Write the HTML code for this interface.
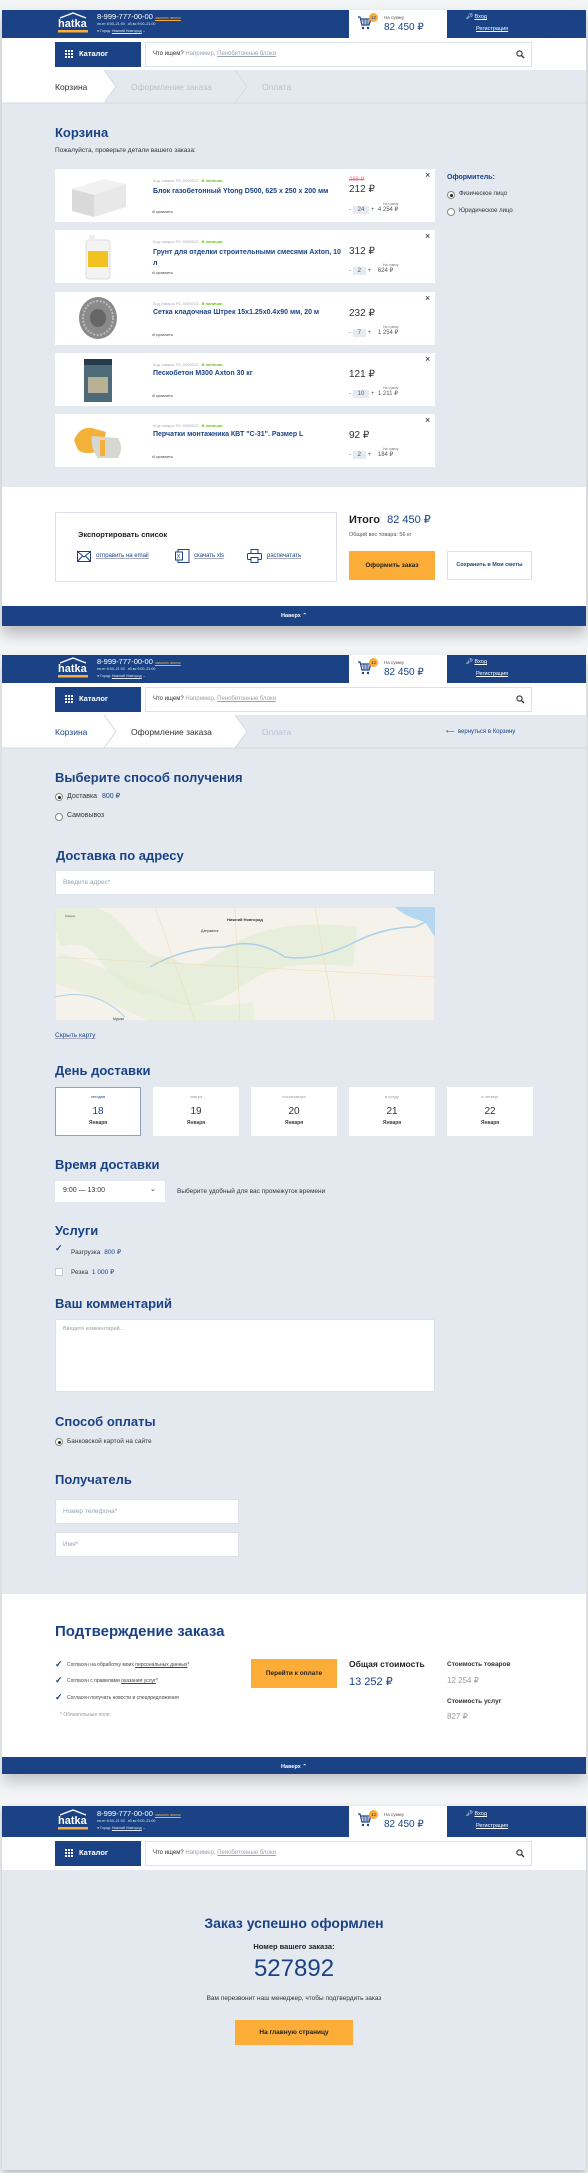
<!DOCTYPE html>
<html><head><meta charset="utf-8">
<style>
*{margin:0;padding:0;box-sizing:border-box}
body{width:588px;height:2173px;background:#f4f5f7;font-family:"Liberation Sans",sans-serif;position:relative;overflow:hidden;color:#222}
.a{position:absolute;white-space:nowrap}
.blue{background:#1a4285}
.gray{background:#e4e9f0}
.h{color:#1a4285;font-weight:bold;font-size:13px}
.card{background:#fff}
.inp{background:#fff;border:1px solid #dde2ea}
.ph{color:#9aa3ad;font-size:6.5px}
.rad{width:8px;height:8px;border:1px solid #888;border-radius:50%;background:#fff}
.rad.on::after{content:"";position:absolute;left:1.5px;top:1.5px;width:3px;height:3px;border-radius:50%;background:#222}
.chk{width:8px;height:8px;border:1px solid #c8ced6;background:#fff}
.tick{color:#1a4285;font-size:9px;font-weight:bold}
.or{background:#fbad38}
.sm{font-size:4px;color:#aab}
.lnk{color:#1a4285;text-decoration:underline;text-decoration-color:#aab}
</style></head><body>

<div class="a" style="left:2px;top:10px;width:584px;height:616px;background:#fff;box-shadow:0 8px 14px rgba(0,0,0,.25)"></div>
<div class="a" style="left:2px;top:655px;width:584px;height:1119px;background:#fff;box-shadow:0 8px 14px rgba(0,0,0,.2)"></div>
<div class="a" style="left:2px;top:1806px;width:584px;height:364px;background:#fff;box-shadow:0 3px 6px rgba(0,0,0,.25)"></div>

<!-- header 1 -->
<div class="a blue" style="left:2px;top:10px;width:347px;height:28px"></div>
<div class="a blue" style="left:447px;top:10px;width:139px;height:28px"></div>
<svg class="a" style="left:58px;top:12px" width="32" height="24"><path d="M2 6 L15 1 L28 6" stroke="#fff" stroke-width="1.3" fill="none"/><text x="0" y="15" fill="#fff" font-family="Liberation Sans" font-weight="bold" font-size="11">hatka</text><rect x="0" y="18" width="30" height="2.5" fill="#fbad38"/></svg>
<div class="a" style="left:97px;top:12px;color:#fff;font-size:7.5px">8-999-777-00-00 <span style="font-size:3.5px;color:#fbad38;text-decoration:underline">заказать звонок</span></div>
<div class="a" style="left:97px;top:22px;color:#dfe6f2;font-size:3.6px">пн-пт 8:00–21:00 &nbsp; сб-вс 9:00–21:00</div>
<div class="a" style="left:97px;top:29px;color:#dfe6f2;font-size:3.6px">● Город: <u>Нижний Новгород</u> ⌄</div>
<svg class="a" style="left:358px;top:16px" width="14" height="14"><path d="M0 1h2l2 8h7l2-6H3" stroke="#1a4285" stroke-width="1.2" fill="none"/><path d="M4 5h8M5 7h6M6 3v6M9 3v6" stroke="#1a4285" stroke-width=".7"/><circle cx="5" cy="12" r="1.2" fill="#1a4285"/><circle cx="10" cy="12" r="1.2" fill="#1a4285"/></svg>
<div class="a or" style="left:369px;top:13px;width:9px;height:9px;border-radius:50%;font-size:4.5px;text-align:center;line-height:9px;color:#1a4285">12</div>
<div class="a" style="left:384px;top:15px;font-size:4.5px;color:#555">На сумму</div>
<div class="a" style="left:384px;top:22px;font-size:10px;color:#1a4285">82 450 ₽</div>
<div class="a" style="left:466px;top:14px;color:#fff;font-size:5.5px">🔑︎ <u>Вход</u></div>
<div class="a" style="left:476px;top:26px;color:#fff;font-size:5.5px"><u>Регистрация</u></div>
<div class="a blue" style="left:55px;top:42px;width:86px;height:25px"></div>
<div class="a" style="left:65px;top:50px;width:8px;height:8px;background:repeating-linear-gradient(90deg,#fff 0 2px,transparent 2px 3px),#1a4285;"></div>
<div class="a" style="left:65px;top:50px;width:8px;height:8px;background:repeating-linear-gradient(0deg,transparent 0 2px,#1a4285 2px 3px)"></div>
<div class="a" style="left:79px;top:49px;color:#fff;font-size:7.5px;font-weight:bold">Каталог</div>
<div class="a inp" style="left:145px;top:42px;width:387px;height:25px"></div>
<div class="a" style="left:153px;top:51px;font-size:6px;color:#333">Что ищем? <span style="color:#9aa3ad">Например, <u>Пенобетонные блоки</u></span></div>
<svg class="a" style="left:516px;top:50px" width="9" height="9"><circle cx="3.5" cy="3.5" r="2.6" stroke="#333" stroke-width="1.1" fill="none"/><path d="M5.5 5.5L8 8" stroke="#333" stroke-width="1.3"/></svg>

<!-- header 2 -->
<div class="a blue" style="left:2px;top:655px;width:347px;height:28px"></div>
<div class="a blue" style="left:447px;top:655px;width:139px;height:28px"></div>
<svg class="a" style="left:58px;top:657px" width="32" height="24"><path d="M2 6 L15 1 L28 6" stroke="#fff" stroke-width="1.3" fill="none"/><text x="0" y="15" fill="#fff" font-family="Liberation Sans" font-weight="bold" font-size="11">hatka</text><rect x="0" y="18" width="30" height="2.5" fill="#fbad38"/></svg>
<div class="a" style="left:97px;top:657px;color:#fff;font-size:7.5px">8-999-777-00-00 <span style="font-size:3.5px;color:#fbad38;text-decoration:underline">заказать звонок</span></div>
<div class="a" style="left:97px;top:667px;color:#dfe6f2;font-size:3.6px">пн-пт 8:00–21:00 &nbsp; сб-вс 9:00–21:00</div>
<div class="a" style="left:97px;top:674px;color:#dfe6f2;font-size:3.6px">● Город: <u>Нижний Новгород</u> ⌄</div>
<svg class="a" style="left:358px;top:661px" width="14" height="14"><path d="M0 1h2l2 8h7l2-6H3" stroke="#1a4285" stroke-width="1.2" fill="none"/><path d="M4 5h8M5 7h6M6 3v6M9 3v6" stroke="#1a4285" stroke-width=".7"/><circle cx="5" cy="12" r="1.2" fill="#1a4285"/><circle cx="10" cy="12" r="1.2" fill="#1a4285"/></svg>
<div class="a or" style="left:369px;top:658px;width:9px;height:9px;border-radius:50%;font-size:4.5px;text-align:center;line-height:9px;color:#1a4285">12</div>
<div class="a" style="left:384px;top:660px;font-size:4.5px;color:#555">На сумму</div>
<div class="a" style="left:384px;top:667px;font-size:10px;color:#1a4285">82 450 ₽</div>
<div class="a" style="left:466px;top:659px;color:#fff;font-size:5.5px">🔑︎ <u>Вход</u></div>
<div class="a" style="left:476px;top:671px;color:#fff;font-size:5.5px"><u>Регистрация</u></div>
<div class="a blue" style="left:55px;top:687px;width:86px;height:25px"></div>
<div class="a" style="left:65px;top:695px;width:8px;height:8px;background:repeating-linear-gradient(90deg,#fff 0 2px,transparent 2px 3px),#1a4285;"></div>
<div class="a" style="left:65px;top:695px;width:8px;height:8px;background:repeating-linear-gradient(0deg,transparent 0 2px,#1a4285 2px 3px)"></div>
<div class="a" style="left:79px;top:694px;color:#fff;font-size:7.5px;font-weight:bold">Каталог</div>
<div class="a inp" style="left:145px;top:687px;width:387px;height:25px"></div>
<div class="a" style="left:153px;top:696px;font-size:6px;color:#333">Что ищем? <span style="color:#9aa3ad">Например, <u>Пенобетонные блоки</u></span></div>
<svg class="a" style="left:516px;top:695px" width="9" height="9"><circle cx="3.5" cy="3.5" r="2.6" stroke="#333" stroke-width="1.1" fill="none"/><path d="M5.5 5.5L8 8" stroke="#333" stroke-width="1.3"/></svg>

<!-- header 3 -->
<div class="a blue" style="left:2px;top:1806px;width:347px;height:31px"></div>
<div class="a blue" style="left:447px;top:1806px;width:139px;height:31px"></div>
<svg class="a" style="left:58px;top:1809px" width="32" height="24"><path d="M2 6 L15 1 L28 6" stroke="#fff" stroke-width="1.3" fill="none"/><text x="0" y="15" fill="#fff" font-family="Liberation Sans" font-weight="bold" font-size="11">hatka</text><rect x="0" y="18" width="30" height="2.5" fill="#fbad38"/></svg>
<div class="a" style="left:97px;top:1809px;color:#fff;font-size:7.5px">8-999-777-00-00 <span style="font-size:3.5px;color:#fbad38;text-decoration:underline">заказать звонок</span></div>
<div class="a" style="left:97px;top:1819px;color:#dfe6f2;font-size:3.6px">пн-пт 8:00–21:00 &nbsp; сб-вс 9:00–21:00</div>
<div class="a" style="left:97px;top:1826px;color:#dfe6f2;font-size:3.6px">● Город: <u>Нижний Новгород</u> ⌄</div>
<svg class="a" style="left:358px;top:1813px" width="14" height="14"><path d="M0 1h2l2 8h7l2-6H3" stroke="#1a4285" stroke-width="1.2" fill="none"/><path d="M4 5h8M5 7h6M6 3v6M9 3v6" stroke="#1a4285" stroke-width=".7"/><circle cx="5" cy="12" r="1.2" fill="#1a4285"/><circle cx="10" cy="12" r="1.2" fill="#1a4285"/></svg>
<div class="a or" style="left:369px;top:1810px;width:9px;height:9px;border-radius:50%;font-size:4.5px;text-align:center;line-height:9px;color:#1a4285">12</div>
<div class="a" style="left:384px;top:1812px;font-size:4.5px;color:#555">На сумму</div>
<div class="a" style="left:384px;top:1819px;font-size:10px;color:#1a4285">82 450 ₽</div>
<div class="a" style="left:466px;top:1811px;color:#fff;font-size:5.5px">🔑︎ <u>Вход</u></div>
<div class="a" style="left:476px;top:1823px;color:#fff;font-size:5.5px"><u>Регистрация</u></div>
<div class="a blue" style="left:55px;top:1841px;width:86px;height:25px"></div>
<div class="a" style="left:65px;top:1849px;width:8px;height:8px;background:repeating-linear-gradient(90deg,#fff 0 2px,transparent 2px 3px),#1a4285;"></div>
<div class="a" style="left:65px;top:1849px;width:8px;height:8px;background:repeating-linear-gradient(0deg,transparent 0 2px,#1a4285 2px 3px)"></div>
<div class="a" style="left:79px;top:1848px;color:#fff;font-size:7.5px;font-weight:bold">Каталог</div>
<div class="a inp" style="left:145px;top:1841px;width:387px;height:25px"></div>
<div class="a" style="left:153px;top:1850px;font-size:6px;color:#333">Что ищем? <span style="color:#9aa3ad">Например, <u>Пенобетонные блоки</u></span></div>
<svg class="a" style="left:516px;top:1849px" width="9" height="9"><circle cx="3.5" cy="3.5" r="2.6" stroke="#333" stroke-width="1.1" fill="none"/><path d="M5.5 5.5L8 8" stroke="#333" stroke-width="1.3"/></svg>

<!-- ===== SCREEN 1 ===== -->
<div class="a gray" style="left:2px;top:70px;width:584px;height:417px"></div>
<svg class="a" style="left:2px;top:70px" width="584" height="34"><polygon points="0,0 102,0 114,16.5 102,33 0,33" fill="#fff"/><path d="M102 0 L114 16.5 L102 33 M233 0 L245 16.5 L233 33" stroke="#d3d9e2" fill="none"/><line x1="0" y1="33" x2="584" y2="33" stroke="#d3d9e2"/></svg>
<div class="a" style="left:55px;top:82px;font-size:8.5px;color:#333">Корзина</div>
<div class="a" style="left:131px;top:82px;font-size:8.5px;color:#b8c1cc">Оформление заказа</div>
<div class="a" style="left:262px;top:82px;font-size:8.5px;color:#b8c1cc">Оплата</div>
<div class="a h" style="left:55px;top:125px;font-size:13px">Корзина</div>
<div class="a" style="left:55px;top:147px;font-size:6.5px;color:#333">Пожалуйста, проверьте детали вашего заказа:</div>

<div class="a card" style="left:55px;top:169px;width:380px;height:53px"></div>
<div class="a card" style="left:55px;top:230px;width:380px;height:53px"></div>
<div class="a card" style="left:55px;top:292px;width:380px;height:53px"></div>
<div class="a card" style="left:55px;top:353px;width:380px;height:53px"></div>
<div class="a card" style="left:55px;top:414px;width:380px;height:53px"></div>
<svg class="a" style="left:70px;top:177px" width="56" height="40"><polygon points="2,12 34,2 56,7 24,18" fill="#f1f1f1"/><polygon points="2,12 24,18 24,40 2,34" fill="#d9d9d9"/><polygon points="24,18 56,7 56,30 24,40" fill="#e8e8e8"/></svg>
<svg class="a" style="left:83px;top:235px" width="30" height="45"><rect x="3" y="5" width="24" height="39" rx="3" fill="#f3f3f3" stroke="#ddd"/><rect x="6" y="0" width="6" height="6" fill="#eee"/><rect x="5" y="16" width="20" height="16" fill="#f2c221"/></svg>
<svg class="a" style="left:77px;top:296px" width="42" height="45"><ellipse cx="21" cy="22" rx="19" ry="21" fill="#8a8a8a"/><ellipse cx="21" cy="22" rx="15" ry="17" fill="none" stroke="#bbb" stroke-dasharray="2 1.5" stroke-width="2"/><ellipse cx="21" cy="22" rx="8" ry="9" fill="#666"/></svg>
<svg class="a" style="left:82px;top:357px" width="32" height="46"><rect x="2" y="2" width="28" height="43" fill="#4d6a78"/><rect x="2" y="2" width="28" height="6" fill="#263b47"/><rect x="6" y="20" width="20" height="16" fill="#b9b095"/></svg>
<svg class="a" style="left:72px;top:418px" width="52" height="45"><path d="M2 22 Q8 8 20 10 L34 14 L30 32 Q14 38 6 32Z" fill="#f3b13a"/><path d="M20 18 L46 20 Q52 30 46 40 L26 40 Q18 30 20 18Z" fill="#d8d6d0"/><rect x="28" y="22" width="5" height="16" fill="#f3b13a"/></svg>

<div class="a sm" style="left:153px;top:178px">Код товара: РС-0000013 &nbsp; <span style="color:#6bc21c;font-weight:bold">В наличии</span></div>
<div class="a" style="left:153px;top:186px;font-size:7px;color:#1a4285;font-weight:bold;line-height:11px;white-space:normal;width:180px">Блок газобетонный Ytong D500, 625 x 250 x 200 мм</div>
<div class="a" style="left:152px;top:209px;font-size:4px;color:#444">ıll сравнить</div>
<div class="a" style="left:349px;top:176px;font-size:6px;color:#f07080;text-decoration:line-through">288 ₽</div>
<div class="a" style="left:349px;top:184px;font-size:10px;color:#333">212 ₽</div>

<div class="a sm" style="left:153px;top:239px">Код товара: РС-0000013 &nbsp; <span style="color:#6bc21c;font-weight:bold">В наличии</span></div>
<div class="a" style="left:153px;top:247px;font-size:7px;color:#1a4285;font-weight:bold;line-height:11px;white-space:normal;width:190px">Грунт для отделки строительными смесями Axton, 10 л</div>
<div class="a" style="left:152px;top:270px;font-size:4px;color:#444">ıll сравнить</div>
<div class="a" style="left:349px;top:246px;font-size:10px;color:#333">312 ₽</div>

<div class="a sm" style="left:153px;top:301px">Код товара: РС-0000013 &nbsp; <span style="color:#6bc21c;font-weight:bold">В наличии</span></div>
<div class="a" style="left:153px;top:309px;font-size:7px;color:#1a4285;font-weight:bold">Сетка кладочная Штрек 15x1.25x0.4x90 мм, 20 м</div>
<div class="a" style="left:152px;top:332px;font-size:4px;color:#444">ıll сравнить</div>
<div class="a" style="left:349px;top:308px;font-size:10px;color:#333">232 ₽</div>

<div class="a sm" style="left:153px;top:362px">Код товара: РС-0000013 &nbsp; <span style="color:#6bc21c;font-weight:bold">В наличии</span></div>
<div class="a" style="left:153px;top:370px;font-size:7px;color:#1a4285;font-weight:bold">Пескобетон М300 Axton 30 кг</div>
<div class="a" style="left:152px;top:393px;font-size:4px;color:#444">ıll сравнить</div>
<div class="a" style="left:349px;top:369px;font-size:10px;color:#333">121 ₽</div>

<div class="a sm" style="left:153px;top:423px">Код товара: РС-0000013 &nbsp; <span style="color:#6bc21c;font-weight:bold">В наличии</span></div>
<div class="a" style="left:153px;top:431px;font-size:7px;color:#1a4285;font-weight:bold">Перчатки монтажника КВТ "С-31". Размер L</div>
<div class="a" style="left:152px;top:454px;font-size:4px;color:#444">ıll сравнить</div>
<div class="a" style="left:349px;top:430px;font-size:10px;color:#333">92 ₽</div>

<div class="a" style="left:349px;top:206px;font-size:6px;color:#555">- <span style="background:#e6ebf2;padding:1px 5px">24</span> + &nbsp;4 254 ₽</div>
<div class="a" style="left:383px;top:202px;font-size:3.5px;color:#777">На сумму</div>
<div class="a" style="left:349px;top:267px;font-size:6px;color:#555">- <span style="background:#e6ebf2;padding:1px 5px">2</span> + &nbsp;&nbsp;&nbsp;624 ₽</div>
<div class="a" style="left:383px;top:263px;font-size:3.5px;color:#777">На сумму</div>
<div class="a" style="left:349px;top:329px;font-size:6px;color:#555">- <span style="background:#e6ebf2;padding:1px 5px">7</span> + &nbsp;&nbsp;&nbsp;1 254 ₽</div>
<div class="a" style="left:383px;top:325px;font-size:3.5px;color:#777">На сумму</div>
<div class="a" style="left:349px;top:390px;font-size:6px;color:#555">- <span style="background:#e6ebf2;padding:1px 5px">10</span> + &nbsp;1 211 ₽</div>
<div class="a" style="left:383px;top:386px;font-size:3.5px;color:#777">На сумму</div>
<div class="a" style="left:349px;top:451px;font-size:6px;color:#555">- <span style="background:#e6ebf2;padding:1px 5px">2</span> + &nbsp;&nbsp;&nbsp;184 ₽</div>
<div class="a" style="left:383px;top:447px;font-size:3.5px;color:#777">На сумму</div>
<div class="a" style="left:425px;top:170px;font-size:9px;color:#222">×</div>
<div class="a" style="left:425px;top:231px;font-size:9px;color:#222">×</div>
<div class="a" style="left:425px;top:293px;font-size:9px;color:#222">×</div>
<div class="a" style="left:425px;top:354px;font-size:9px;color:#222">×</div>
<div class="a" style="left:425px;top:415px;font-size:9px;color:#222">×</div>

<div class="a" style="left:447px;top:174px;font-size:7px;color:#1a4285;font-weight:bold">Оформитель:</div>
<div class="a rad on" style="left:447px;top:191px"></div>
<div class="a" style="left:459px;top:191px;font-size:6px;color:#333">Физическое лицо</div>
<div class="a rad" style="left:447px;top:208px"></div>
<div class="a" style="left:459px;top:208px;font-size:6px;color:#333">Юридическое лицо</div>

<div class="a" style="left:55px;top:512px;width:282px;height:70px;border:1px solid #dde2ea"></div>
<div class="a" style="left:78px;top:530px;font-size:7.5px;font-weight:bold;color:#222">Экспортировать список</div>
<svg class="a" style="left:77px;top:551px" width="14" height="11"><rect x=".5" y=".5" width="13" height="10" fill="none" stroke="#1a4285"/><path d="M.5 .5L7 6L13.5 .5M.5 10.5L5.5 5M13.5 10.5L8.5 5" stroke="#1a4285" fill="none"/></svg>
<div class="a lnk" style="left:96px;top:553px;font-size:6px">отправить на email</div>
<svg class="a" style="left:175px;top:549px" width="15" height="14"><rect x="3" y=".5" width="11" height="13" fill="none" stroke="#1a4285"/><rect x=".5" y="3" width="7" height="8" fill="#fff" stroke="#1a4285"/><text x="1.5" y="9.5" font-size="6" fill="#1a4285" font-family="Liberation Sans">X</text></svg>
<div class="a lnk" style="left:194px;top:553px;font-size:6px">скачать xls</div>
<svg class="a" style="left:247px;top:549px" width="15" height="14"><rect x="4" y=".5" width="7" height="4" fill="none" stroke="#1a4285"/><rect x=".5" y="4.5" width="14" height="6" rx="1" fill="none" stroke="#1a4285"/><rect x="4" y="8.5" width="7" height="5" fill="#fff" stroke="#1a4285"/></svg>
<div class="a lnk" style="left:267px;top:553px;font-size:6px">распечатать</div>

<div class="a" style="left:349px;top:513px;font-size:11px;font-weight:bold;color:#222">Итого <span style="font-weight:normal;color:#1a4285;margin-left:4px">82 450 ₽</span></div>
<div class="a" style="left:349px;top:532px;font-size:5.5px;color:#555">Общий вес товара: 56 кг</div>
<div class="a or" style="left:349px;top:551px;width:86px;height:29px;font-size:6.5px;font-weight:bold;text-align:center;line-height:29px;color:#222">Оформить заказ</div>
<div class="a" style="left:447px;top:551px;width:85px;height:29px;border:1px solid #dde2ea;font-size:5.5px;font-weight:bold;text-align:center;line-height:27px;color:#1a4285">Сохранить в Мои сметы</div>
<div class="a blue" style="left:2px;top:606px;width:584px;height:20px;color:#fff;font-size:5.5px;font-weight:bold;text-align:center;line-height:20px">Наверх ⌃</div>

<!-- ===== SCREEN 2 ===== -->
<div class="a gray" style="left:2px;top:715px;width:584px;height:879px"></div>
<svg class="a" style="left:2px;top:715px" width="584" height="34"><polygon points="0,0 233,0 245,16.5 233,33 0,33" fill="#fff"/><path d="M102 0 L114 16.5 L102 33 M233 0 L245 16.5 L233 33" stroke="#d3d9e2" fill="none"/><line x1="0" y1="33" x2="584" y2="33" stroke="#d3d9e2"/></svg>
<div class="a" style="left:55px;top:727px;font-size:8.5px;color:#1a4285">Корзина</div>
<div class="a" style="left:131px;top:727px;font-size:8.5px;color:#333">Оформление заказа</div>
<div class="a" style="left:262px;top:727px;font-size:8.5px;color:#b8c1cc">Оплата</div>
<div class="a" style="left:446px;top:728px;font-size:6px;color:#1a4285">⟵ &nbsp;вернуться в Корзину</div>

<div class="a h" style="left:55px;top:770px">Выберите способ получения</div>
<div class="a rad on" style="left:55px;top:793px"></div>
<div class="a" style="left:67px;top:792px;font-size:7px;color:#333">Доставка <span style="color:#1a4285;margin-left:3px">800 ₽</span></div>
<div class="a rad" style="left:55px;top:813px"></div>
<div class="a" style="left:67px;top:812px;font-size:7px;color:#333">Самовывоз</div>

<div class="a h" style="left:56px;top:848px">Доставка по адресу</div>
<div class="a inp" style="left:55px;top:870px;width:380px;height:25px"></div>
<div class="a ph" style="left:63px;top:879px">Введите адрес*</div>
<svg class="a" style="left:55px;top:907px" width="380" height="114">
<rect width="380" height="114" fill="#f4f2ea" stroke="#dde2ea"/>
<path d="M0 20 Q40 10 60 40 T110 70 Q140 90 180 60 T300 40" fill="none" stroke="#e0ebd2" stroke-width="40" opacity=".6"/>
<path d="M0 60 Q60 80 100 100 T200 110" fill="none" stroke="#e0ebd2" stroke-width="30" opacity=".5"/>
<path d="M95 60 Q130 40 170 40 Q200 30 230 50 Q260 55 300 35 Q330 20 360 20 L380 10" fill="none" stroke="#a9d0ea" stroke-width="1.5"/>
<path d="M340 0 Q350 10 370 15 L380 30 L380 0Z" fill="#b5d7ef"/>
<path d="M0 90 Q40 80 70 110" fill="none" stroke="#a9d0ea" stroke-width="1"/>
<path d="M180 0 L185 114 M0 50 L380 70 M100 0 L140 114 M260 0 L280 114" stroke="#f0dcb5" stroke-width=".6"/>
<text x="172" y="14" font-size="4" font-weight="bold" fill="#333" font-family="Liberation Sans">Нижний Новгород</text>
<text x="146" y="25" font-size="3.5" fill="#333" font-family="Liberation Sans">Дзержинск</text>
<text x="58" y="113" font-size="3.5" fill="#333" font-family="Liberation Sans">Муром</text>
<text x="10" y="10" font-size="3" fill="#555" font-family="Liberation Sans">Ковров</text>
</svg>
<div class="a lnk" style="left:55px;top:1032px;font-size:6.5px">Скрыть карту</div>

<div class="a h" style="left:55px;top:1063px">День доставки</div>
<div class="a card" style="left:55px;top:1087px;width:86px;height:49px;border:1px solid #8ea0c0"></div>
<div class="a card" style="left:153px;top:1087px;width:86px;height:49px"></div>
<div class="a card" style="left:251px;top:1087px;width:86px;height:49px"></div>
<div class="a card" style="left:349px;top:1087px;width:86px;height:49px"></div>
<div class="a card" style="left:447px;top:1087px;width:86px;height:49px"></div>
<div class="a" style="left:55px;top:1094px;width:86px;text-align:center;font-size:4px;color:#1a4285">сегодня</div>
<div class="a" style="left:153px;top:1094px;width:86px;text-align:center;font-size:4px;color:#999">завтра</div>
<div class="a" style="left:251px;top:1094px;width:86px;text-align:center;font-size:4px;color:#999">послезавтра</div>
<div class="a" style="left:349px;top:1094px;width:86px;text-align:center;font-size:4px;color:#999">в среду</div>
<div class="a" style="left:447px;top:1094px;width:86px;text-align:center;font-size:4px;color:#999">в четверг</div>
<div class="a" style="left:55px;top:1106px;width:86px;text-align:center;font-size:10px;color:#1a4285">18</div>
<div class="a" style="left:153px;top:1106px;width:86px;text-align:center;font-size:10px;color:#333">19</div>
<div class="a" style="left:251px;top:1106px;width:86px;text-align:center;font-size:10px;color:#333">20</div>
<div class="a" style="left:349px;top:1106px;width:86px;text-align:center;font-size:10px;color:#333">21</div>
<div class="a" style="left:447px;top:1106px;width:86px;text-align:center;font-size:10px;color:#333">22</div>
<div class="a" style="left:55px;top:1120px;width:86px;text-align:center;font-size:5px;color:#444;font-weight:bold">Января</div>
<div class="a" style="left:153px;top:1120px;width:86px;text-align:center;font-size:5px;color:#444;font-weight:bold">Января</div>
<div class="a" style="left:251px;top:1120px;width:86px;text-align:center;font-size:5px;color:#444;font-weight:bold">Января</div>
<div class="a" style="left:349px;top:1120px;width:86px;text-align:center;font-size:5px;color:#444;font-weight:bold">Января</div>
<div class="a" style="left:447px;top:1120px;width:86px;text-align:center;font-size:5px;color:#444;font-weight:bold">Января</div>

<div class="a h" style="left:55px;top:1157px">Время доставки</div>
<div class="a card" style="left:55px;top:1181px;width:110px;height:21px"></div>
<div class="a" style="left:63px;top:1187px;font-size:7px;color:#333">9:00 — 13:00</div>
<div class="a" style="left:150px;top:1185px;font-size:7px;color:#333">⌄</div>
<div class="a" style="left:177px;top:1188px;font-size:6.5px;color:#333">Выберите удобный для вас промежуток времени</div>

<div class="a h" style="left:55px;top:1223px">Услуги</div>
<div class="a tick" style="left:55px;top:1243px">✓</div>
<div class="a" style="left:71px;top:1248px;font-size:6.5px;color:#333">Разгрузка <span style="color:#1a4285;margin-left:2px">800 ₽</span></div>
<div class="a chk" style="left:55px;top:1268px"></div>
<div class="a" style="left:71px;top:1268px;font-size:6.5px;color:#333">Резка <span style="color:#1a4285;margin-left:2px">1 000 ₽</span></div>

<div class="a h" style="left:55px;top:1296px">Ваш комментарий</div>
<div class="a inp" style="left:55px;top:1319px;width:380px;height:73px"></div>
<div class="a ph" style="left:63px;top:1326px;font-size:5.5px">Введите комментарий...</div>

<div class="a h" style="left:55px;top:1414px">Способ оплаты</div>
<div class="a rad on" style="left:55px;top:1438px"></div>
<div class="a" style="left:67px;top:1438px;font-size:6.5px;color:#333">Банковской картой на сайте</div>

<div class="a h" style="left:55px;top:1472px">Получатель</div>
<div class="a inp" style="left:55px;top:1499px;width:184px;height:25px"></div>
<div class="a ph" style="left:63px;top:1508px">Номер телефона*</div>
<div class="a inp" style="left:55px;top:1532px;width:184px;height:25px"></div>
<div class="a ph" style="left:63px;top:1541px">Имя*</div>

<div class="a h" style="left:55px;top:1623px;font-size:15px">Подтверждение заказа</div>
<div class="a tick" style="left:55px;top:1659px">✓</div>
<div class="a" style="left:67px;top:1662px;font-size:5px;color:#444">Согласен на обработку моих <u>персональных данных</u>*</div>
<div class="a tick" style="left:55px;top:1675px">✓</div>
<div class="a" style="left:67px;top:1678px;font-size:5px;color:#444">Согласен с правилами <u>оказания услуг</u>*</div>
<div class="a tick" style="left:55px;top:1692px">✓</div>
<div class="a" style="left:67px;top:1695px;font-size:5px;color:#444">Согласен получать новости и спецпредложения</div>
<div class="a" style="left:60px;top:1712px;font-size:5px;color:#999">* Обязательные поля</div>
<div class="a or" style="left:251px;top:1659px;width:86px;height:29px;font-size:6.5px;font-weight:bold;text-align:center;line-height:29px;color:#222">Перейти к оплате</div>
<div class="a" style="left:349px;top:1659px;font-size:8.5px;font-weight:bold;color:#222">Общая стоимость</div>
<div class="a" style="left:349px;top:1675px;font-size:11px;color:#1a4285">13 252 ₽</div>
<div class="a" style="left:447px;top:1661px;font-size:6.5px;font-weight:bold;color:#333">Стоимость товаров</div>
<div class="a" style="left:447px;top:1676px;font-size:8px;color:#999">12 254 ₽</div>
<div class="a" style="left:447px;top:1698px;font-size:6.5px;font-weight:bold;color:#333">Стоимость услуг</div>
<div class="a" style="left:447px;top:1712px;font-size:8px;color:#999">827 ₽</div>
<div class="a blue" style="left:2px;top:1757px;width:584px;height:17px;color:#fff;font-size:5.5px;font-weight:bold;text-align:center;line-height:20px">Наверх ⌃</div>

<!-- ===== SCREEN 3 ===== -->
<div class="a gray" style="left:2px;top:1870px;width:584px;height:300px"></div>
<div class="a h" style="left:0;top:1915px;width:588px;text-align:center;font-size:14px">Заказ успешно оформлен</div>
<div class="a" style="left:0;top:1942px;width:588px;text-align:center;font-size:7.5px;font-weight:bold;color:#222">Номер вашего заказа:</div>
<div class="a" style="left:0;top:1955px;width:588px;text-align:center;font-size:24px;color:#1a4285">527892</div>
<div class="a" style="left:0;top:1995px;width:588px;text-align:center;font-size:6.5px;color:#333">Вам перезвонит наш менеджер, чтобы подтвердить заказ</div>
<div class="a or" style="left:235px;top:2020px;width:118px;height:25px;font-size:6.5px;font-weight:bold;text-align:center;line-height:25px;color:#222">На главную страницу</div>
</body></html>
